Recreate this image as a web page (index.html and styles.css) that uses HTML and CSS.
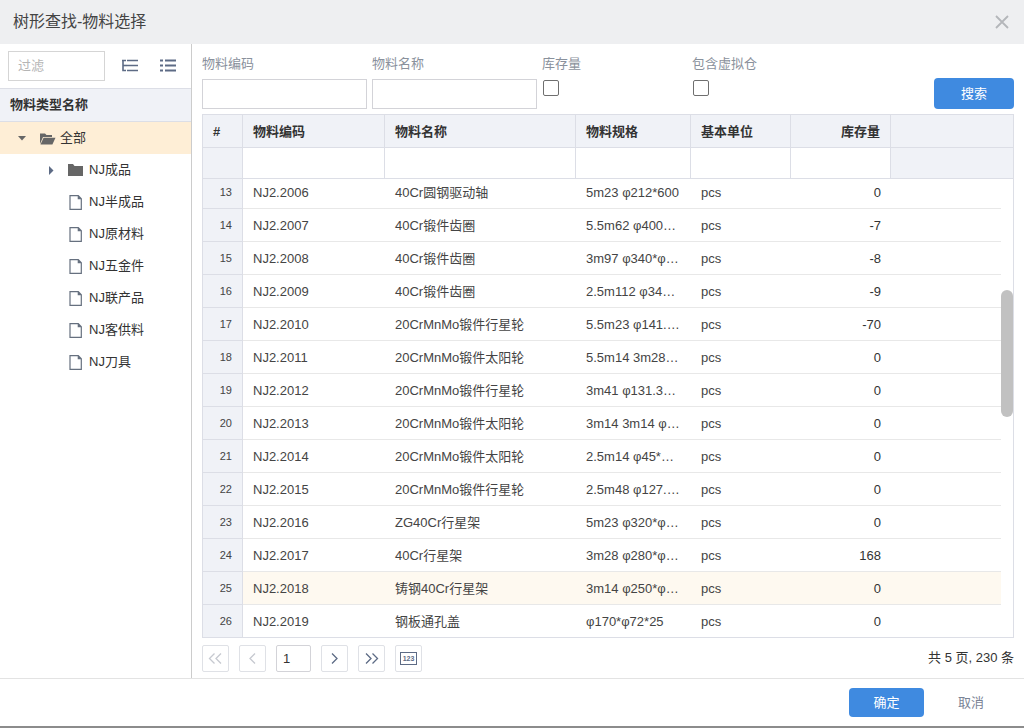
FILE: index.html
```html
<!DOCTYPE html>
<html lang="zh">
<head>
<meta charset="utf-8">
<title>树形查找-物料选择</title>
<link rel="stylesheet" href="styles.css">
</head>
<body>
<div class="dialog">
  <header class="head">
    <h1 class="title">树形查找-物料选择</h1>
    <svg class="close" width="16" height="16" viewBox="0 0 16 16"><path d="M2 2 L14 14 M14 2 L2 14" stroke="#b4b6ba" stroke-width="1.8" fill="none"/></svg>
  </header>
  <main class="main">
    <aside class="side">
      <div class="side-tools">
        <div class="filter">过滤</div>
        <svg class="tool tool-a" width="16" height="14" viewBox="0 0 16 14"><path d="M0 1.5H4M1 1.5V11.5H4M5 1.5H16M5 6.5H16M5 11.5H16" stroke="#5d6b85" stroke-width="1.6" fill="none"/><path d="M5 6.5H1" stroke="#5d6b85" stroke-width="1.6"/></svg>
        <svg class="tool tool-b" width="16" height="14" viewBox="0 0 16 14"><path d="M0 1.5H3M5 1.5H16M0 6.5H3M5 6.5H16M0 11.5H3M5 11.5H16" stroke="#5d6b85" stroke-width="1.8" fill="none"/></svg>
      </div>
      <div class="tree-head">物料类型名称</div>
      <div class="tree-row selected">
        <svg class="caret-down" width="9" height="5" viewBox="0 0 9 5"><path d="M0 0H8L4 4.5Z" fill="#666"/></svg>
        <svg class="folder" width="17" height="13" viewBox="0 0 17 13"><path d="M1 12V1.5H6L7.5 3H13V5H4L1 12Z" fill="#666"/><path d="M1.5 12.5L4.6 5.8H16.5L13.4 12.5Z" fill="#666"/></svg>
        <span>全部</span>
      </div>
      <div class="tree-row level">
        <svg class="caret-right" width="5" height="9" viewBox="0 0 5 9"><path d="M0 0L4.5 4.5L0 9Z" fill="#5d6b85"/></svg>
        <svg class="folder-closed" width="15" height="12" viewBox="0 0 15 12"><path d="M0 0H5L6.5 2H15V12H0Z" fill="#666"/></svg>
        <span>NJ成品</span>
      </div>
      <div class="tree-row leaf"><svg class="file" width="13" height="15" viewBox="0 0 13 15"><path d="M1 .7H9.300L12.300 3.700V14.300H1Z M9.300 .7V3.700H12.300" fill="#fff" stroke="#66707f" stroke-width="1.200"/></svg><span>NJ半成品</span></div>
      <div class="tree-row leaf"><svg class="file" width="13" height="15" viewBox="0 0 13 15"><path d="M1 .7H9.300L12.300 3.700V14.300H1Z M9.300 .7V3.700H12.300" fill="#fff" stroke="#66707f" stroke-width="1.200"/></svg><span>NJ原材料</span></div>
      <div class="tree-row leaf"><svg class="file" width="13" height="15" viewBox="0 0 13 15"><path d="M1 .7H9.300L12.300 3.700V14.300H1Z M9.300 .7V3.700H12.300" fill="#fff" stroke="#66707f" stroke-width="1.200"/></svg><span>NJ五金件</span></div>
      <div class="tree-row leaf"><svg class="file" width="13" height="15" viewBox="0 0 13 15"><path d="M1 .7H9.300L12.300 3.700V14.300H1Z M9.300 .7V3.700H12.300" fill="#fff" stroke="#66707f" stroke-width="1.200"/></svg><span>NJ联产品</span></div>
      <div class="tree-row leaf"><svg class="file" width="13" height="15" viewBox="0 0 13 15"><path d="M1 .7H9.300L12.300 3.700V14.300H1Z M9.300 .7V3.700H12.300" fill="#fff" stroke="#66707f" stroke-width="1.200"/></svg><span>NJ客供料</span></div>
      <div class="tree-row leaf"><svg class="file" width="13" height="15" viewBox="0 0 13 15"><path d="M1 .7H9.300L12.300 3.700V14.300H1Z M9.300 .7V3.700H12.300" fill="#fff" stroke="#66707f" stroke-width="1.200"/></svg><span>NJ刀具</span></div>
    </aside>
    <section class="content">
      <form class="search">
        <div class="field w165"><div class="label">物料编码</div><div class="input"></div></div>
        <div class="field w165"><div class="label">物料名称</div><div class="input"></div></div>
        <div class="field w150"><div class="label">库存量</div><div class="check"></div></div>
        <div class="field w150"><div class="label">包含虚拟仓</div><div class="check"></div></div>
        <div class="btn search-btn">搜索</div>
      </form>
      <div class="grid">
        <div class="row head-row">
          <div class="c c0">#</div><div class="c c1">物料编码</div><div class="c c2">物料名称</div><div class="c c3">物料规格</div><div class="c c4">基本单位</div><div class="c c5 num">库存量</div><div class="c c6"></div>
        </div>
        <div class="row filter-row">
          <div class="c c0"></div><div class="c c1"></div><div class="c c2"></div><div class="c c3"></div><div class="c c4"></div><div class="c c5"></div><div class="c c6"></div>
        </div>
        <div class="body">
          <div class="rows">
            <div class="row data"><div class="c c0">13</div><div class="c c1">NJ2.2006</div><div class="c c2">40Cr圆钢驱动轴</div><div class="c c3">5m23 φ212*600</div><div class="c c4">pcs</div><div class="c c5 num">0</div></div>
            <div class="row data"><div class="c c0">14</div><div class="c c1">NJ2.2007</div><div class="c c2">40Cr锻件齿圈</div><div class="c c3">5.5m62 φ400…</div><div class="c c4">pcs</div><div class="c c5 num">-7</div></div>
            <div class="row data"><div class="c c0">15</div><div class="c c1">NJ2.2008</div><div class="c c2">40Cr锻件齿圈</div><div class="c c3">3m97 φ340*φ…</div><div class="c c4">pcs</div><div class="c c5 num">-8</div></div>
            <div class="row data"><div class="c c0">16</div><div class="c c1">NJ2.2009</div><div class="c c2">40Cr锻件齿圈</div><div class="c c3">2.5m112 φ34…</div><div class="c c4">pcs</div><div class="c c5 num">-9</div></div>
            <div class="row data"><div class="c c0">17</div><div class="c c1">NJ2.2010</div><div class="c c2">20CrMnMo锻件行星轮</div><div class="c c3">5.5m23 φ141.…</div><div class="c c4">pcs</div><div class="c c5 num">-70</div></div>
            <div class="row data"><div class="c c0">18</div><div class="c c1">NJ2.2011</div><div class="c c2">20CrMnMo锻件太阳轮</div><div class="c c3">5.5m14 3m28…</div><div class="c c4">pcs</div><div class="c c5 num">0</div></div>
            <div class="row data"><div class="c c0">19</div><div class="c c1">NJ2.2012</div><div class="c c2">20CrMnMo锻件行星轮</div><div class="c c3">3m41 φ131.3…</div><div class="c c4">pcs</div><div class="c c5 num">0</div></div>
            <div class="row data"><div class="c c0">20</div><div class="c c1">NJ2.2013</div><div class="c c2">20CrMnMo锻件太阳轮</div><div class="c c3">3m14 3m14 φ…</div><div class="c c4">pcs</div><div class="c c5 num">0</div></div>
            <div class="row data"><div class="c c0">21</div><div class="c c1">NJ2.2014</div><div class="c c2">20CrMnMo锻件太阳轮</div><div class="c c3">2.5m14 φ45*…</div><div class="c c4">pcs</div><div class="c c5 num">0</div></div>
            <div class="row data"><div class="c c0">22</div><div class="c c1">NJ2.2015</div><div class="c c2">20CrMnMo锻件行星轮</div><div class="c c3">2.5m48 φ127.…</div><div class="c c4">pcs</div><div class="c c5 num">0</div></div>
            <div class="row data"><div class="c c0">23</div><div class="c c1">NJ2.2016</div><div class="c c2">ZG40Cr行星架</div><div class="c c3">5m23 φ320*φ…</div><div class="c c4">pcs</div><div class="c c5 num">0</div></div>
            <div class="row data"><div class="c c0">24</div><div class="c c1">NJ2.2017</div><div class="c c2">40Cr行星架</div><div class="c c3">3m28 φ280*φ…</div><div class="c c4">pcs</div><div class="c c5 num">168</div></div>
            <div class="row data hover"><div class="c c0">25</div><div class="c c1">NJ2.2018</div><div class="c c2">铸钢40Cr行星架</div><div class="c c3">3m14 φ250*φ…</div><div class="c c4">pcs</div><div class="c c5 num">0</div></div>
            <div class="row data"><div class="c c0">26</div><div class="c c1">NJ2.2019</div><div class="c c2">钢板通孔盖</div><div class="c c3">φ170*φ72*25</div><div class="c c4">pcs</div><div class="c c5 num">0</div></div>
          </div>
          <div class="thumb"></div>
        </div>
      </div>
      <div class="pager">
        <div class="pg off"><svg width="15" height="11" viewBox="0 0 15 11"><path d="M6.500 .5L1.500 5.500L6.500 10.500M13 .5L8 5.500L13 10.500" stroke="#c6c9d0" stroke-width="1.300" fill="none"/></svg></div>
        <div class="pg off"><svg width="7" height="11" viewBox="0 0 7 11"><path d="M6 .5L1 5.500L6 10.500" stroke="#c6c9d0" stroke-width="1.300" fill="none"/></svg></div>
        <div class="pg-input">1</div>
        <div class="pg"><svg width="7" height="11" viewBox="0 0 7 11"><path d="M1 .5L6 5.500L1 10.500" stroke="#5d6b85" stroke-width="1.300" fill="none"/></svg></div>
        <div class="pg"><svg width="15" height="11" viewBox="0 0 15 11"><path d="M2 .5L7 5.500L2 10.500M8.500 .5L13.500 5.500L8.500 10.500" stroke="#5d6b85" stroke-width="1.300" fill="none"/></svg></div>
        <div class="pg"><span class="badge123">123</span></div>
        <div class="total">共 5 页, 230 条</div>
      </div>
    </section>
  </main>
  <footer class="foot">
    <div class="btn ok">确定</div>
    <div class="cancel">取消</div>
  </footer>
</div>
</body>
</html>
```

FILE: styles.css
```css
* { box-sizing: border-box; }
html, body { margin: 0; padding: 0; }
body {
  width: 1024px;
  height: 728px;
  overflow: hidden;
  background: #fff;
  color: #333;
  font: 13px/1.5 "Liberation Sans", "Noto Sans CJK SC", sans-serif;
}
.dialog {
  height: 728px;
  display: flex;
  flex-direction: column;
  border-bottom: 2px solid #8c8c8c;
}
.head {
  height: 44px;
  flex: none;
  background: #eeeff1;
  display: flex;
  align-items: center;
  justify-content: space-between;
  padding: 0 14px 0 13px;
}
.title { margin: 0; font-size: 16px; font-weight: 400; color: #444; line-height: 20px; }
.main { flex: 1; display: flex; min-height: 0; }
.side { width: 192px; flex: none; border-right: 1px solid #ccc; }
.side-tools { height: 44px; display: flex; align-items: center; padding: 0 0 1px 8px; }
.filter {
  width: 97px; height: 30px; border: 1px solid #d5d5d5;
  padding: 0 9px; line-height: 28px; color: #b5b5b5;
}
.tool-a { margin-left: 17px; }
.tool-b { margin-left: 22px; }
.tree-head {
  height: 34px; background: #f0f2f7;
  border-top: 1px solid #dcdee6; border-bottom: 1px solid #dcdee6;
  padding: 0 10px; line-height: 32px; font-weight: 700; color: #333;
}
.tree-row { height: 32px; display: flex; align-items: center; color: #333; }
.tree-row span { line-height: 32px; }
.selected { background: #feeed6; padding-left: 18px; }
.caret-down { margin-right: 12px; }
.folder { margin-right: 4px; }
.level { padding-left: 49px; }
.folder-closed { margin: 0 6px 0 14px; }
.leaf { padding-left: 69px; }
.file { margin-right: 7px; }
.content { flex: 1; min-width: 0; padding: 0 10px 0 10px; }
.search { height: 70px; display: flex; gap: 5px; position: relative; }
.field { flex: none; }
.w165 { width: 165px; }
.w150 { width: 145px; }
.label { height: 35px; padding-top: 10px; line-height: 20px; color: #8a919c; }
.input { height: 30px; border: 1px solid #d3d3d8; background: #fff; }
.check { width: 16px; height: 16px; margin: 1px 0 0 1px; border: 1px solid #6f6f6f; border-radius: 2px; }
.btn { background: #3f8ae0; color: #fff; border-radius: 4px; text-align: center; }
.search-btn { width: 80px; height: 31px; line-height: 31px; margin: 34px 0 0 auto; }
.grid { border: 1px solid #dcdee6; height: 524px; }
.row { display: flex; }
.c { flex: none; padding: 0 10px; white-space: nowrap; overflow: hidden; }
.c0 { width: 40px; background: #f0f2f7; border-right: 1px solid #dcdee6; }
.c1 { width: 142px; }
.c2 { width: 191px; }
.c3 { width: 115px; }
.c4 { width: 100px; }
.c5 { width: 100px; }
.c6 { width: 122px; }
.num { text-align: right; }
.head-row { height: 33px; background: #f0f2f7; border-bottom: 1px solid #dcdee6; }
.head-row .c { line-height: 33px; font-weight: 700; color: #333; border-right: 1px solid #dcdee6; }
.head-row .c6 { border-right: 0; }
.filter-row { height: 31px; border-bottom: 1px solid #dcdee6; }
.filter-row .c { border-right: 1px solid #dcdee6; }
.filter-row .c6 { background: #f0f2f7; border-right: 0; }
.body { height: 458px; overflow: hidden; position: relative; }
.rows { margin-top: -3px; width: 798px; }
.data { height: 33px; background: #fff; border-bottom: 1px solid #e8e8e8; }
.data .c { line-height: 33px; color: #444; }
.data .c0 { font-size: 11px; text-align: right; border-bottom: 1px solid #dcdee6; margin-bottom: -1px; height: 33px; }
.data .c5 { color: #333; }
.data.hover { background: #fef9f0; }
.thumb {
  position: absolute; right: 0; top: 111px;
  width: 12px; height: 127px; border-radius: 6px; background: #c1c1c1;
}
.pager { height: 40px; display: flex; align-items: center; }
.pg {
  width: 27px; height: 27px; border: 1px solid #dfe1e6; border-radius: 2px;
  display: flex; align-items: center; justify-content: center; margin-right: 10px;
}
.pg-input {
  width: 35px; height: 27px; border: 1px solid #d3d3d8; border-radius: 2px; margin-right: 10px;
  padding-left: 6px; line-height: 25px;
}
.badge123 {
  width: 17px; height: 13px; border: 1px solid #5d6b85;
  font-size: 7px; line-height: 11px; text-align: center; color: #5d6b85; font-weight: 700;
}
.total { margin-left: auto; color: #333; }
.foot {
  height: 48px; flex: none; border-top: 1px solid #e3e3e3;
  display: flex; align-items: center; justify-content: flex-end; padding-right: 40px;
}
.ok { width: 75px; height: 29px; line-height: 29px; }
.cancel { margin-left: 34px; color: #7a8396; }
```
